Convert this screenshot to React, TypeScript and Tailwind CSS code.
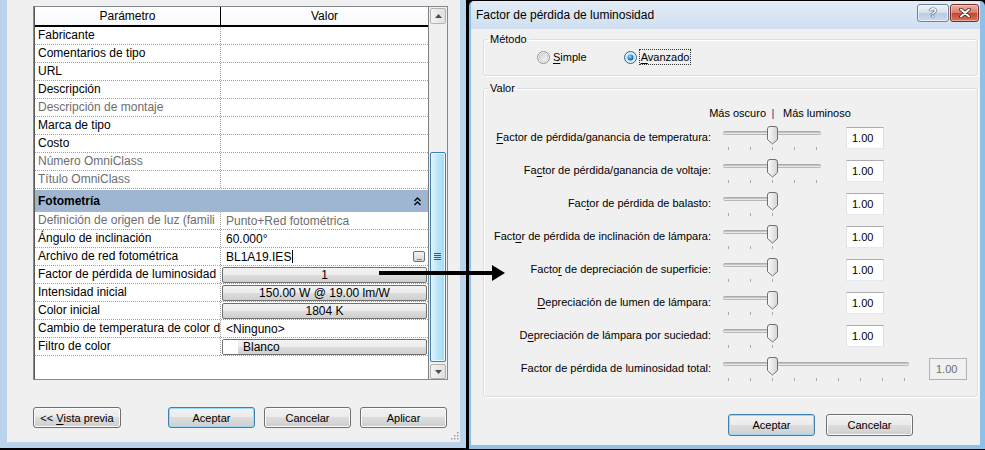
import React from "react";

const FONT = "font-['Liberation_Sans',Arial,Helvetica,sans-serif]";
const BTN =
  "rounded-[3px] border border-[#707070] bg-[linear-gradient(to_bottom,#f2f2f2_0%,#ebebeb_50%,#dddddd_50%,#cfcfcf_100%)] shadow-[inset_0_0_0_1px_#fcfcfc] flex items-center justify-center";
const BTN_DEF =
  "rounded-[3px] border border-[#3c7fb1] bg-[linear-gradient(to_bottom,#f2f2f2_0%,#ebebeb_50%,#dddddd_50%,#cfcfcf_100%)] shadow-[inset_0_0_0_1px_#9fd8f7] flex items-center justify-center";
const CELLBTN =
  "flex-1 self-start mt-[1px] h-[16px] rounded-[2px] border border-[#707070] bg-[linear-gradient(to_bottom,#f2f2f2_0%,#ebebeb_50%,#dddddd_50%,#cfcfcf_100%)] flex items-center leading-[14px]";

function PRow({
  p,
  gray,
  children,
  vClass = "pl-[5px]",
}: {
  p: string;
  gray?: boolean;
  children?: React.ReactNode;
  vClass?: string;
}) {
  return (
    <div className="flex h-[18px] shrink-0 border-b border-dotted border-[#a0a0a0]">
      <div
        className={`w-[186px] shrink-0 border-r border-dotted border-[#a0a0a0] pl-[3px] overflow-hidden whitespace-nowrap leading-[17px] ${
          gray ? "text-[#6d6d6d]" : ""
        }`}
      >
        {p}
      </div>
      <div className={`flex-1 min-w-0 flex items-center whitespace-nowrap ${vClass}`}>{children}</div>
    </div>
  );
}

function ScrollArrow({ up }: { up?: boolean }) {
  return (
    <svg width="7" height="4" viewBox="0 0 7 4">
      {up ? <path d="M0,4 L3.5,0 L7,4 Z" fill="#4d4d4d" /> : <path d="M0,0 L3.5,4 L7,0 Z" fill="#4d4d4d" />}
    </svg>
  );
}

function LeftWindow() {
  return (
    <div className="relative w-[466px] h-[448px] shrink-0 border-l-[7px] border-r-[6px] border-b-[6px] border-[#bcd3ec] bg-[#f0f0f0] flex flex-col">
      {/* property grid */}
      <div className="ml-[26px] mt-[6px] w-[415px] h-[374px] flex border border-[#828790] bg-white">
        <div className="w-[395px] flex flex-col border-l border-[#5a5a5a] border-r border-r-[#808080] bg-white">
          {/* header */}
          <div className="flex h-[20px] shrink-0 border-b-2 border-black bg-[linear-gradient(to_bottom,#ffffff,#f7f8fa)]">
            <div className="w-[186px] shrink-0 border-r border-black text-center leading-[18px]">Parámetro</div>
            <div className="flex-1 text-center leading-[18px]">Valor</div>
          </div>
          <PRow p="Fabricante" />
          <PRow p="Comentarios de tipo" />
          <PRow p="URL" />
          <PRow p="Descripción" />
          <PRow p="Descripción de montaje" gray />
          <PRow p="Marca de tipo" />
          <PRow p="Costo" />
          <PRow p="Número OmniClass" gray />
          <PRow p="Título OmniClass" gray />
          {/* group band */}
          <div className="h-[23px] shrink-0 border-t border-white bg-[#9fb6d3] flex items-center justify-between pl-[3px] pr-[7px]">
            <span className="font-bold">Fotometría</span>
            <svg width="7" height="9" viewBox="0 0 7 9">
              <path d="M0.5,4 L3.5,1 L6.5,4 M0.5,8 L3.5,5 L6.5,8" fill="none" stroke="#000" strokeWidth="1.3" />
            </svg>
          </div>
          <PRow p="Definición de origen de luz (famili" gray>
            <span className="text-[#6d6d6d]">Punto+Red fotométrica</span>
          </PRow>
          <PRow p="Ángulo de inclinación">60.000°</PRow>
          <PRow p="Archivo de red fotométrica" vClass="pl-[5px] pr-[3px]">
            <span>BL1A19.IES</span>
            <span className="ml-[1px] w-[1px] h-[13px] bg-black" />
            <span className="flex-1" />
            <span className="w-[12px] h-[11px] rounded-[2px] border border-[#707070] bg-[linear-gradient(to_bottom,#f4f4f4,#d6d6d6)] flex items-end justify-center">
              <span className="text-[8px] leading-[6px] tracking-[-0.5px]">...</span>
            </span>
          </PRow>
          <PRow p="Factor de pérdida de luminosidad" vClass="px-[1px]">
            <div className={`${CELLBTN} justify-center`}>1</div>
          </PRow>
          <PRow p="Intensidad inicial" vClass="px-[1px]">
            <div className={`${CELLBTN} justify-center`}>150.00 W @ 19.00 lm/W</div>
          </PRow>
          <PRow p="Color inicial" vClass="px-[1px]">
            <div className={`${CELLBTN} justify-center`}>1804 K</div>
          </PRow>
          <PRow p="Cambio de temperatura de color d">&lt;Ninguno&gt;</PRow>
          <PRow p="Filtro de color" vClass="px-[1px]">
            <div className={`${CELLBTN} overflow-hidden`}>
              <span className="w-[15px] h-full bg-white shrink-0" />
              <span className="pl-[5px]">Blanco</span>
            </div>
          </PRow>
          <div className="flex-1" />
        </div>
        {/* scrollbar */}
        <div className="w-[18px] shrink-0 bg-[#f0f0f0] flex flex-col items-center">
          <div className="mt-[1px] w-[16px] h-[16px] shrink-0 rounded-[2px] border border-[#b3b3b3] bg-[linear-gradient(to_right,#f3f3f3,#e0e0e0)] flex items-center justify-center">
            <ScrollArrow up />
          </div>
          <div className="h-[128px] shrink-0" />
          <div className="w-[16px] h-[210px] shrink-0 rounded-[2px] border border-[#3c7fb1] bg-[linear-gradient(to_right,#e3f4fc,#b9e4f9_50%,#a6d9f4)] shadow-[inset_0_0_0_1px_#e9f6fd] flex items-center justify-center">
            <svg width="8" height="8" viewBox="0 0 8 8">
              <path d="M0,0.5 H7 M0,2.5 H7 M0,4.5 H7 M0,6.5 H7" stroke="#2a5f8a" strokeWidth="1" />
            </svg>
          </div>
          <div className="h-[2px] shrink-0" />
          <div className="w-[16px] h-[15px] shrink-0 rounded-[2px] border border-[#b3b3b3] bg-[linear-gradient(to_right,#f3f3f3,#e0e0e0)] flex items-center justify-center">
            <ScrollArrow />
          </div>
        </div>
      </div>

      {/* buttons */}
      <div className="flex mt-[27px] ml-[26px] text-[11px]">
        <div className={`${BTN} w-[88px] h-[21px]`}>
          &lt;&lt;&nbsp;<span className="underline underline-offset-[2px]">V</span>ista previa
        </div>
        <div className={`${BTN_DEF} w-[87px] h-[21px] ml-[47px]`}>Aceptar</div>
        <div className={`${BTN} w-[87px] h-[21px] ml-[9px]`}>Cancelar</div>
        <div className={`${BTN} w-[87px] h-[21px] ml-[9px]`}>Aplicar</div>
      </div>

      {/* size grip */}
      <svg className="absolute right-[1px] bottom-[2px]" width="9" height="9" viewBox="0 0 9 9">
        {[
          [7, 1],
          [7, 4],
          [4, 4],
          [7, 7],
          [4, 7],
          [1, 7],
        ].map(([x, y], i) => (
          <rect key={i} x={x} y={y} width="1.5" height="1.5" fill="#9a9a9a" />
        ))}
      </svg>
    </div>
  );
}

function Radio({ on }: { on?: boolean }) {
  return (
    <svg width="13" height="13" viewBox="0 0 13 13" className="shrink-0">
      <defs>
        <linearGradient id="rg0" x1="0" y1="0" x2="1" y2="1">
          <stop offset="0" stopColor="#cfcfcf" />
          <stop offset="1" stopColor="#fafafa" />
        </linearGradient>
        <radialGradient id="rg1" cx="0.4" cy="0.35" r="0.7">
          <stop offset="0" stopColor="#a6e2ff" />
          <stop offset="0.5" stopColor="#2d93de" />
          <stop offset="1" stopColor="#0a4f90" />
        </radialGradient>
      </defs>
      <circle cx="6.5" cy="6.5" r="6" fill="#f4f4f4" stroke={on ? "#2c628b" : "#8e8f8f"} />
      <circle cx="6.5" cy="6.5" r="4.2" fill={on ? "#dff1fc" : "url(#rg0)"} stroke={on ? "#b8dcf3" : "#c9c9c9"} strokeWidth="0.8" />
      {on && <circle cx="6.5" cy="6.5" r="3" fill="url(#rg1)" />}
    </svg>
  );
}

function Slider({ mode }: { mode: "normal" | "half" | "full" }) {
  const w = mode === "full" ? 190 : 100;
  const trackEnd = mode === "full" ? 185 : mode === "half" ? 46 : 97;
  const ticks =
    mode === "full"
      ? [5, 27, 49, 71, 93, 115, 137, 159, 181]
      : mode === "half"
      ? [5, 27, 49]
      : [5, 27, 49, 71, 93];
  return (
    <svg width={w} height="33" viewBox={`0 0 ${w} 33`} className="shrink-0">
      <defs>
        <linearGradient id="thumbg" x1="0" y1="0" x2="1" y2="0">
          <stop offset="0" stopColor="#fbfbfb" />
          <stop offset="1" stopColor="#d4d4d4" />
        </linearGradient>
      </defs>
      <rect x="0.5" y="10.5" width={trackEnd} height="3" rx="1" fill="#e7eaea" stroke="#b7b7b7" />
      <line x1="1" y1="11" x2={trackEnd} y2="11" stroke="#9e9e9e" strokeWidth="1" />
      {ticks.map((t) => (
        <line key={t} x1={t + 0.5} y1="26" x2={t + 0.5} y2="29" stroke="#a8a8a8" strokeWidth="1" />
      ))}
      <path
        d="M44.5,8 Q44.5,5.5 47,5.5 H52 Q54.5,5.5 54.5,8 V18.5 L49.5,23 L44.5,18.5 Z"
        fill="url(#thumbg)"
        stroke="#6f6f6f"
        strokeWidth="1"
      />
    </svg>
  );
}

function VRow({
  label,
  mode = "normal",
  disabled,
}: {
  label: React.ReactNode;
  mode?: "normal" | "half" | "full";
  disabled?: boolean;
}) {
  return (
    <div className="flex items-start h-[33px] shrink-0">
      <div className="w-[227px] shrink-0 text-right mt-[9px] leading-[14px] whitespace-nowrap">{label}</div>
      <div className="ml-[12px]">
        <Slider mode={mode} />
      </div>
      {disabled ? (
        <div className="ml-[16px] mt-[6px] w-[38px] h-[22px] border border-[#adb2b5] bg-[#f0f0f0] text-[#6d6d6d] pl-[6px] flex items-center">
          1.00
        </div>
      ) : (
        <div className="ml-[23px] mt-[6px] w-[38px] h-[22px] border border-[#abadb3] border-l-[#e2e3ea] border-r-[#dbdfe6] border-b-[#e3e9ef] bg-white pl-[5px] flex items-center">
          1.00
        </div>
      )}
    </div>
  );
}

function U({ children }: { children: React.ReactNode }) {
  return <span className="underline underline-offset-[2px]">{children}</span>;
}

function Dialog() {
  return (
    <div className="ml-[3px] mt-[1px] w-[516px] h-[448px] shrink-0 flex flex-col bg-[#c4d9ef] border-l-[2px] border-r-[5px] border-b-[4px] border-[#8fc0e8] rounded-t-[5px]">
      {/* title bar */}
      <div className="h-[28px] shrink-0 flex items-start bg-[linear-gradient(to_bottom,#e3ecf7,#cfdff0)] rounded-t-[4px]">
        <div className="pl-[5px] pt-[7px] leading-[14px] flex-1">Factor de pérdida de luminosidad</div>
        <div className="mt-[3px] w-[32px] h-[18px] rounded-[3px] border border-[#6f819a] bg-[linear-gradient(to_bottom,#eef3fa_0%,#d3dfee_50%,#b8cbe3_51%,#c9d9ee_100%)] shadow-[inset_0_0_0_1px_rgba(255,255,255,0.6)] flex items-center justify-center">
          <span className="font-bold text-[13px] leading-[14px] text-white [text-shadow:0_0_1px_#2b3a4f,0_0_1px_#2b3a4f,0_0_1px_#2b3a4f]">
            ?
          </span>
        </div>
        <div className="mt-[3px] ml-[1px] mr-[1px] w-[29px] h-[18px] rounded-[3px] border border-[#7d2d24] bg-[linear-gradient(to_bottom,#eab0a3_0%,#d9786a_50%,#c4452f_51%,#d6755a_100%)] shadow-[inset_0_0_0_1px_rgba(255,255,255,0.4)] flex items-center justify-center">
          <svg width="12" height="10" viewBox="0 0 12 10">
            <path d="M2,1.5 L10,8.5 M10,1.5 L2,8.5" stroke="#4a1a12" strokeWidth="3.6" strokeLinecap="round" />
            <path d="M2,1.5 L10,8.5 M10,1.5 L2,8.5" stroke="#ffffff" strokeWidth="2" strokeLinecap="round" />
          </svg>
        </div>
      </div>

      {/* body */}
      <div className="flex-1 bg-[#f0f0f0] pl-[12px] pr-[2px] flex flex-col text-[11px]">
        <fieldset className="mt-[3px] border border-[#d5dfe5] rounded-[3px] shadow-[inset_1px_1px_0_#fff,1px_1px_0_#fff]">
          <legend className="ml-[4px] px-[2px] leading-[14px]">Método</legend>
          <div className="h-[22px] flex items-center pl-[53px]">
            <Radio />
            <span className="ml-[3px]">
              <U>S</U>imple
            </span>
            <span className="ml-[37px]">
              <Radio on />
            </span>
            <span className="ml-[3px] px-[1px] outline outline-1 outline-dotted outline-[#333] leading-[14px]">
              <U>A</U>vanzado
            </span>
          </div>
          <div className="h-[7px]" />
        </fieldset>

        <fieldset className="mt-[5px] border border-[#d5dfe5] rounded-[3px] shadow-[inset_1px_1px_0_#fff,1px_1px_0_#fff]">
          <legend className="ml-[4px] px-[2px] leading-[14px]">Valor</legend>
          <div className="mt-[11px] h-[14px] flex leading-[14px]">
            <span className="w-[282px] text-right">Más oscuro</span>
            <span className="w-[14px] text-center text-[#1f3f6d]">|</span>
            <span className="ml-[3px]">Más luminoso</span>
          </div>
          <div className="mt-[1px] flex flex-col">
            <VRow
              label={
                <>
                  <U>F</U>actor de pérdida/ganancia de temperatura:
                </>
              }
            />
            <VRow
              label={
                <>
                  Fa<U>c</U>tor de pérdida/ganancia de voltaje:
                </>
              }
            />
            <VRow
              mode="half"
              label={
                <>
                  Fac<U>t</U>or de pérdida de balasto:
                </>
              }
            />
            <VRow
              mode="half"
              label={
                <>
                  Fact<U>o</U>r de pérdida de inclinación de lámpara:
                </>
              }
            />
            <VRow
              mode="half"
              label={
                <>
                  Facto<U>r</U> de depreciación de superficie:
                </>
              }
            />
            <VRow
              mode="half"
              label={
                <>
                  <U>D</U>epreciación de lumen de lámpara:
                </>
              }
            />
            <VRow
              mode="half"
              label={
                <>
                  D<U>e</U>preciación de lámpara por suciedad:
                </>
              }
            />
            <VRow mode="full" disabled label={<>Factor de pérdida de luminosidad total:</>} />
          </div>
          <div className="h-[11px]" />
        </fieldset>

        <div className="flex mt-[17px]">
          <div className={`${BTN_DEF} ml-[245px] w-[87px] h-[22px]`}>Aceptar</div>
          <div className={`${BTN} ml-[11px] w-[87px] h-[22px]`}>Cancelar</div>
        </div>
      </div>
    </div>
  );
}

function Arrow() {
  return (
    <svg className="absolute left-[370px] top-[260px]" width="140" height="26" viewBox="0 0 140 26">
      <line x1="9" y1="13" x2="124" y2="13" stroke="#000" strokeWidth="4" />
      <polygon points="122,5 135,13 122,21" fill="#000" />
    </svg>
  );
}

export default function App() {
  return (
    <div
      className={`relative w-[985px] h-[450px] overflow-hidden bg-black flex items-start ${FONT} text-[12px] leading-[14px] text-black`}
    >
      <LeftWindow />
      <Dialog />
      <Arrow />
    </div>
  );
}
